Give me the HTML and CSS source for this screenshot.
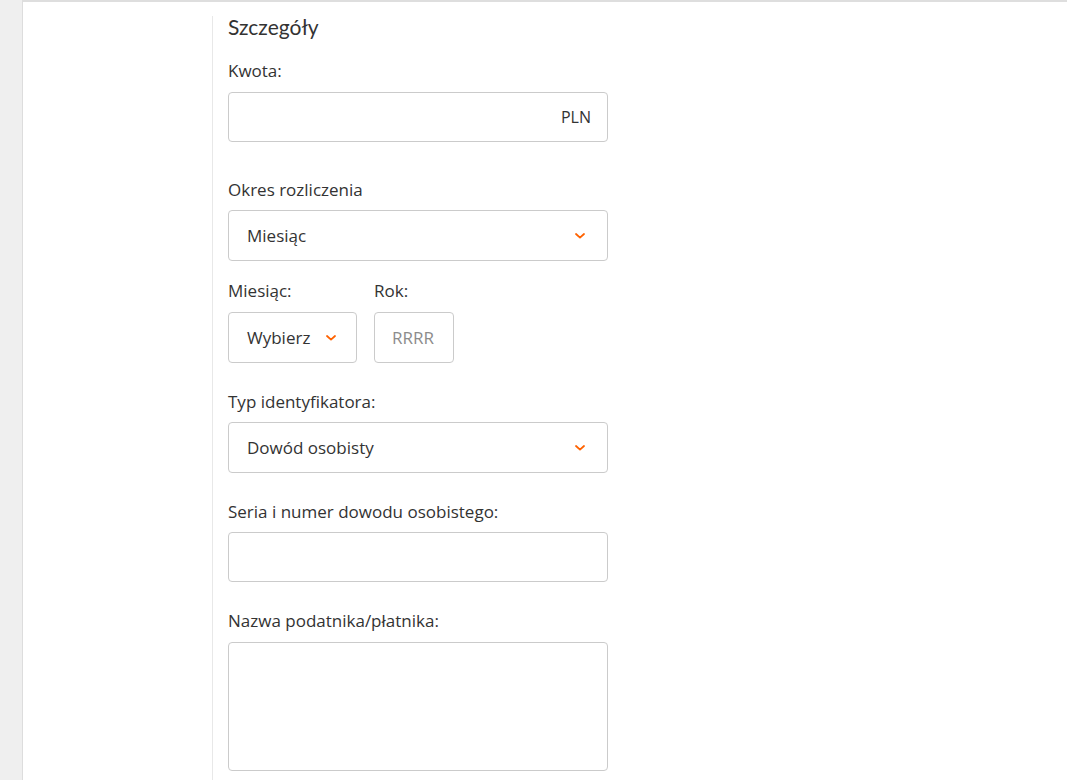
FILE: index.html
```html
<!DOCTYPE html>
<html lang="pl">
<head>
<meta charset="utf-8">
<title>Szczegóły</title>
<link rel="stylesheet" href="styles.css">
</head>
<body>
<div class="page">
  <aside class="side"></aside>
  <main class="content">
    <h2 class="title">Szczegóły</h2>

    <div class="field field-amount">
      <label class="label">Kwota:</label>
      <div class="control control-amount">
        <input class="bare" type="text">
        <span class="suffix">PLN</span>
      </div>
    </div>

    <div class="field field-period">
      <label class="label">Okres rozliczenia</label>
      <div class="control select">
        <span class="value">Miesiąc</span>
        <svg class="chev" width="10" height="6" viewBox="0 0 10 6"><path d="M1 1l4 3.6L9 1" fill="none" stroke="#ff6200" stroke-width="1.8" stroke-linecap="round" stroke-linejoin="round"/></svg>
      </div>
    </div>

    <div class="field-row">
      <div class="field">
        <label class="label">Miesiąc:</label>
        <div class="control select select-small">
          <span class="value">Wybierz</span>
          <svg class="chev" width="10" height="6" viewBox="0 0 10 6"><path d="M1 1l4 3.6L9 1" fill="none" stroke="#ff6200" stroke-width="1.8" stroke-linecap="round" stroke-linejoin="round"/></svg>
        </div>
      </div>
      <div class="field">
        <label class="label">Rok:</label>
        <div class="control control-year">
          <input class="bare" type="text" placeholder="RRRR">
        </div>
      </div>
    </div>

    <div class="field">
      <label class="label">Typ identyfikatora:</label>
      <div class="control select">
        <span class="value">Dowód osobisty</span>
        <svg class="chev" width="10" height="6" viewBox="0 0 10 6"><path d="M1 1l4 3.6L9 1" fill="none" stroke="#ff6200" stroke-width="1.8" stroke-linecap="round" stroke-linejoin="round"/></svg>
      </div>
    </div>

    <div class="field">
      <label class="label">Seria i numer dowodu osobistego:</label>
      <div class="control">
        <input class="bare" type="text">
      </div>
    </div>

    <div class="field field-last">
      <label class="label">Nazwa podatnika/płatnika:</label>
      <textarea class="textarea"></textarea>
    </div>
  </main>
</div>
</body>
</html>
```

FILE: styles.css
```css
* { box-sizing: border-box; }

html, body {
  margin: 0;
  height: 100%;
}

body {
  background: #efefef;
  font-family: "Open Sans", Lato, sans-serif;
  color: #333333;
  overflow: hidden;
}

.page {
  margin-left: 22px;
  min-height: 100vh;
  background: #ffffff;
  border-left: 1px solid #dddddd;
  border-top: 2px solid #dedede;
  display: flex;
}

.side {
  width: 189px;
  flex: none;
}

.content {
  margin-top: 14px;
  border-left: 1px solid #e8e8e8;
  padding-left: 15px;
  width: 396px;
  display: flex;
  flex-direction: column;
}

.title {
  margin: 0 0 23px;
  font-family: Lato, "Open Sans", sans-serif;
  font-size: 21px;
  line-height: 22px;
  font-weight: 400;
  color: #333333;
}

.field {
  display: flex;
  flex-direction: column;
  gap: 10px;
  margin-bottom: 29px;
}

.field-amount { margin-bottom: 38px; gap: 11px; }
.field-period { margin-bottom: 20px; }
.field-last { gap: 11px; margin-bottom: 0; }

.label {
  font-size: 17px;
  line-height: 20px;
  color: #333333;
}

.field-row {
  display: flex;
  gap: 17px;
}

.field-row .field { gap: 11px; }

.control {
  height: 50px;
  width: 380px;
  border: 1px solid #cbcbcb;
  border-radius: 4px;
  background: #ffffff;
  display: flex;
  align-items: center;
  padding: 0 16px 0 18px;
  font-size: 17px;
}

.select {
  height: 51px;
  justify-content: space-between;
  padding-right: 22px;
}

.select-small {
  width: 129px;
  justify-content: flex-start;
  gap: 16px;
}

.control-year {
  width: 80px;
  height: 51px;
  padding: 0 0 0 17px;
}

.bare {
  border: 0;
  outline: none;
  background: transparent;
  font: inherit;
  color: #333333;
  padding: 0;
  min-width: 0;
  flex: 1;
  height: 100%;
}

.bare::placeholder { color: #8c8c8c; }

.suffix {
  color: #333333;
  font-size: 16px;
}

.value { color: #333333; }

.chev { flex: none; display: block; }

.textarea {
  width: 380px;
  height: 129px;
  border: 1px solid #cbcbcb;
  border-radius: 4px;
  resize: none;
  font: inherit;
  padding: 12px 18px;
  outline: none;
}
```
